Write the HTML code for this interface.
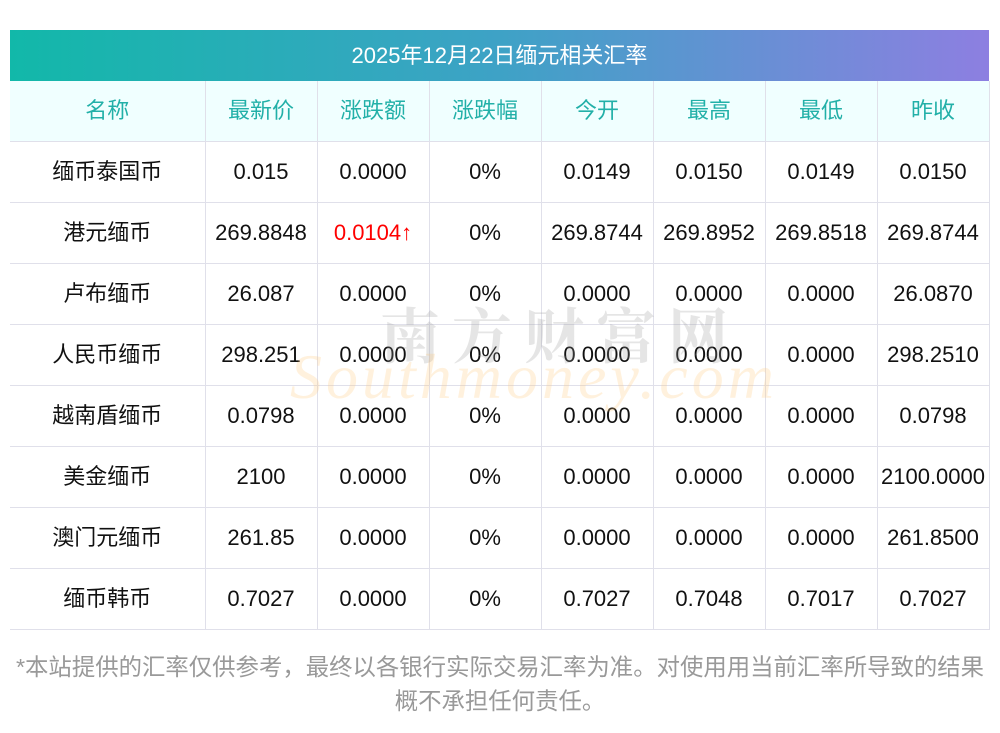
<!DOCTYPE html>
<html><head><meta charset="utf-8"><style>
body{margin:0;background:#fff;width:1000px;height:733px;overflow:hidden;position:relative;font-family:"Liberation Sans","Noto Sans CJK SC",sans-serif;}
.title{position:absolute;left:10px;top:30px;width:979px;height:51px;background:linear-gradient(90deg,#12b8a9,#3ea2c6 50%,#8d7fe1);color:#fff;font-size:22px;line-height:51px;text-align:center;}
table{position:absolute;left:10px;top:81px;border-collapse:collapse;width:979px;table-layout:fixed;z-index:1}
td{height:60px;line-height:60px;border:1px solid #e0e0ea;text-align:center;font-size:22px;color:#111;padding:0;white-space:nowrap;vertical-align:middle}
tr:first-child td{background:#f0ffff;color:#22b0a8;border-top:none}
td:first-child{border-left:none}
.red{color:#f00}
.wm1{position:absolute;left:380px;top:290px;font-size:60px;color:rgba(150,150,150,.25);letter-spacing:12px;font-family:"Noto Serif CJK SC",serif;font-weight:bold;z-index:2}
.wm2{position:absolute;left:290px;top:340px;font-size:64px;color:rgba(255,200,120,.25);font-family:"Liberation Serif",serif;font-style:italic;letter-spacing:4px;z-index:2}
.note{position:absolute;left:0;top:650px;width:1000px;text-align:center;color:#999;font-size:23.4px;line-height:34px}
</style></head><body>
<div class="title">2025年12月22日缅元相关汇率</div>
<table>
<colgroup><col style="width:195px"><col style="width:112px"><col style="width:112px"><col style="width:112px"><col style="width:112px"><col style="width:112px"><col style="width:112px"><col style="width:112px"></colgroup>
<tr><td>名称</td><td>最新价</td><td>涨跌额</td><td>涨跌幅</td><td>今开</td><td>最高</td><td>最低</td><td>昨收</td></tr>
<tr><td>缅币泰国币</td><td>0.015</td><td>0.0000</td><td>0%</td><td>0.0149</td><td>0.0150</td><td>0.0149</td><td>0.0150</td></tr>
<tr><td>港元缅币</td><td>269.8848</td><td class="red">0.0104↑</td><td>0%</td><td>269.8744</td><td>269.8952</td><td>269.8518</td><td>269.8744</td></tr>
<tr><td>卢布缅币</td><td>26.087</td><td>0.0000</td><td>0%</td><td>0.0000</td><td>0.0000</td><td>0.0000</td><td>26.0870</td></tr>
<tr><td>人民币缅币</td><td>298.251</td><td>0.0000</td><td>0%</td><td>0.0000</td><td>0.0000</td><td>0.0000</td><td>298.2510</td></tr>
<tr><td>越南盾缅币</td><td>0.0798</td><td>0.0000</td><td>0%</td><td>0.0000</td><td>0.0000</td><td>0.0000</td><td>0.0798</td></tr>
<tr><td>美金缅币</td><td>2100</td><td>0.0000</td><td>0%</td><td>0.0000</td><td>0.0000</td><td>0.0000</td><td>2100.0000</td></tr>
<tr><td>澳门元缅币</td><td>261.85</td><td>0.0000</td><td>0%</td><td>0.0000</td><td>0.0000</td><td>0.0000</td><td>261.8500</td></tr>
<tr><td>缅币韩币</td><td>0.7027</td><td>0.0000</td><td>0%</td><td>0.7027</td><td>0.7048</td><td>0.7017</td><td>0.7027</td></tr>
</table>
<div class="wm1">南方财富网</div>
<div class="wm2">Southmoney.com</div>
<div class="note">*本站提供的汇率仅供参考，最终以各银行实际交易汇率为准。对使用用当前汇率所导致的结果<br>概不承担任何责任。</div>
</body></html>
